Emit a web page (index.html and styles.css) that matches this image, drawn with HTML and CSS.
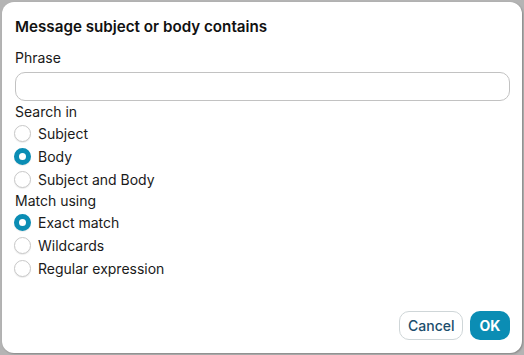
FILE: index.html
```html
<!DOCTYPE html>
<html>
<head>
<meta charset="utf-8">
<link rel="stylesheet" href="styles.css">
</head>
<body>
<div class="dialog">
  <h1 class="title">Message subject or body contains</h1>
  <label class="label phrase-label" for="phrase">Phrase</label>
  <input class="input" id="phrase" type="text">
  <div class="group-label">Search in</div>
  <div class="radio"><span class="dot"></span><span>Subject</span></div>
  <div class="radio"><span class="dot checked"></span><span>Body</span></div>
  <div class="radio"><span class="dot"></span><span>Subject and Body</span></div>
  <div class="group-label">Match using</div>
  <div class="radio"><span class="dot checked"></span><span>Exact match</span></div>
  <div class="radio"><span class="dot"></span><span>Wildcards</span></div>
  <div class="radio"><span class="dot"></span><span>Regular expression</span></div>
  <div class="spacer"></div>
  <div class="actions">
    <button class="btn btn-cancel">Cancel</button>
    <button class="btn btn-ok">OK</button>
  </div>
</div>
</body>
</html>
```
FILE: styles.css
```css
html, body {
  margin: 0;
  padding: 0;
  background: #b4b4b4;
  width: 524px;
  height: 355px;
  overflow: hidden;
  font-family: Inter, "Noto Sans", sans-serif;
}
.dialog {
  box-sizing: border-box;
  margin: 2px 0 0 2px;
  width: 520px;
  height: 351px;
  background: #fff;
  border-radius: 12px;
  padding: 16px 12px 13px 13px;
  display: flex;
  flex-direction: column;
  color: #1a1a1a;
  box-shadow: 1px 1px 2px rgba(0,0,0,0.25);
}
.title {
  margin: 0 0 13px 0;
  font-size: 15.2px;
  font-weight: 600;
  line-height: 18px;
  color: #111;
}
.label, .group-label {
  font-size: 14px;
  line-height: 18px;
}
.phrase-label {
  display: block;
  margin-bottom: 5px;
}
.input {
  box-sizing: border-box;
  height: 29px;
  width: 495px;
  border: 1px solid #c2c2c2;
  border-radius: 10px;
  margin: 0 0 1px 0;
  outline: none;
}
.group-label {
  height: 20px;
  line-height: 20px;
}
.radio {
  display: flex;
  align-items: center;
  gap: 7px;
  height: 23px;
  font-size: 14px;
  color: #1a1a1a;
  margin-left: -1px;
}
.dot {
  box-sizing: border-box;
  width: 17px;
  height: 17px;
  border-radius: 50%;
  border: 1px solid #c8c8c8;
  background: #fff;
  box-shadow: 0 1px 1px rgba(0,0,0,0.08);
}
.dot.checked {
  border: 5.5px solid #0b8db4;
  background: #fff;
}
.spacer { flex: 1; }
.actions {
  display: flex;
  justify-content: flex-end;
  gap: 7px;
}
.btn {
  font-family: Inter, "Noto Sans", sans-serif;
  font-size: 14px;
  height: 29px;
  border-radius: 10px;
  padding: 0 8px;
}
.btn-cancel {
  background: #fff;
  border: 1px solid #cfd6d8;
  color: #1c4d6c;
  font-weight: 500;
  width: 64px;
}
.btn-ok {
  background: #0b8db4;
  border: none;
  color: #fff;
  font-weight: 700;
  width: 40px;
}
```
